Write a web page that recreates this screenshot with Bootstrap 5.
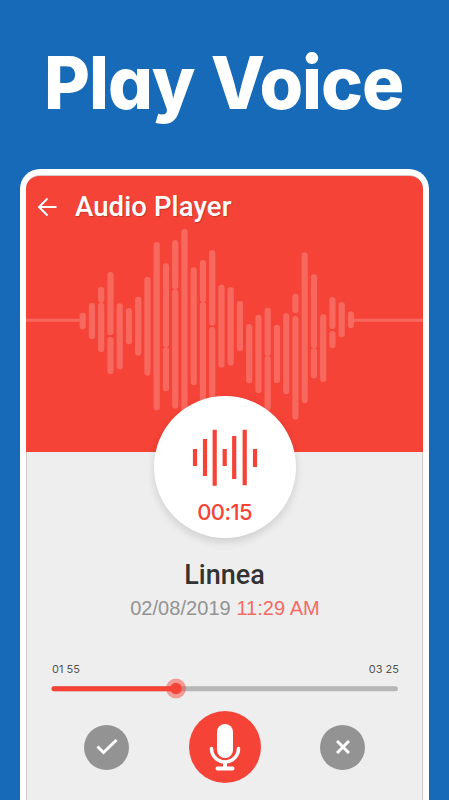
<!DOCTYPE html>
<html lang="en">
<head>
<meta charset="utf-8">
<meta name="viewport" content="width=device-width, initial-scale=1">
<title>Audio Player</title>
<link href="https://cdn.jsdelivr.net/npm/bootstrap@5.3.0/dist/css/bootstrap.min.css" rel="stylesheet">
<style>
body{background:#166ab7;height:800px;font-family:Roboto,"Liberation Sans",sans-serif}
.geo{font-family:Inter,"Open Sans",sans-serif;font-feature-settings:"cv11"}
.promo{height:169px;padding-top:37px}
.promo h1{font-size:73px;line-height:92px;font-weight:800;white-space:nowrap;width:max-content;margin-left:44px;letter-spacing:-1.100px;word-spacing:2px;transform:scaleX(.967);transform-origin:0 50%}
.phone{margin:0 20px;height:640px;border:6px solid #fff;border-bottom:0;border-radius:20px 20px 0 0;background:#eee;box-shadow:inset 0 0 0 1px #d5c9c9;flex:none}
.hero{height:276px;background:#f54337;border-radius:13px 13px 0 0;margin-top:1px}
.app-title{font-size:27.500px;font-weight:500;line-height:32px;letter-spacing:.1px;margin-left:17px;text-shadow:1px 1px 1px #0003}
.topbar{padding:15px 0 0 11px}
.dial{width:142px;height:142px;left:127.6px;top:220.3px;box-shadow:0 4px 8px #0002}
.dial svg{margin-top:33px;margin-left:1px}
.clock{font-size:22px;line-height:24px;font-weight:500;color:#f54337;margin-top:13px;letter-spacing:-.6px}
.meta{padding-top:107px}
.person{font-size:27px;line-height:32px;font-weight:500;color:#333}
.stamp{font-family:"Liberation Sans",sans-serif;font-size:20px;line-height:24px;color:#939393;margin-top:5px;letter-spacing:.05px;padding-left:1px}
.stamp span{color:#f46b66}
.timeline{margin:42px 25px 0 25px}
.times{font-size:11px;line-height:14px;color:#555;padding-left:1px;margin-right:-1px}
.player-track{display:block;margin-top:1px}
.controls{margin:12px 58px 0 58px}
.ctl{width:45px;height:45px;background:#939393}
.ctl-main{width:72px;height:72px;background:#f54337}
</style>
<script src="https://cdn.jsdelivr.net/npm/bootstrap@5.3.0/dist/js/bootstrap.bundle.min.js"></script>
</head>
<body class="m-0 overflow-hidden d-flex flex-column">
<header class="promo flex-shrink-0 text-white"><h1 class="geo mb-0">Play Voice</h1></header>
<main class="phone">
  <section class="hero position-relative">
    <svg class="position-absolute top-0 start-0" width="397" height="276" viewBox="26 176 397 276" fill="none" stroke="#fff" stroke-opacity=".2">
      <path stroke-width="3" d="M26 320.300H79.600M354 320.300H423"/>
      <path id="wave" stroke-width="6.200" stroke-linecap="round"/>
    </svg>
    <div class="topbar d-flex align-items-center position-relative text-white">
      <svg width="21" height="20" viewBox="0 0 21 20" fill="none" stroke="#fff" stroke-width="2"><path d="M19.500 10H2M10.500 1.500L2 10l8.500 8.500"/></svg>
      <div class="app-title">Audio Player</div>
    </div>
    <div class="dial position-absolute rounded-circle bg-white d-flex flex-column align-items-center">
      <svg width="66" height="58" viewBox="192 429 66 58" stroke="#f54337" stroke-width="4.200"><path d="M195 449v17M205 439v37M214.700 429.700v56M224.700 449v17M234.200 436v43M244.700 429.700v55.500M255 449v18"/></svg>
      <div class="clock geo">00:15</div>
    </div>
  </section>
  <section class="meta text-center">
    <div class="person">Linnea</div>
    <div class="stamp">02/08/2019 <span>11:29 AM</span></div>
  </section>
  <section class="timeline">
    <div class="times geo d-flex justify-content-between"><span>01 55</span><span>03 25</span></div>
    <svg class="player-track" width="347" height="22" viewBox="51 677 347 22" stroke-linecap="round" stroke-width="5"><path stroke="#b7b7b7" d="M54 688.700H395.500"/><path stroke="#f54337" d="M54 688.700H176"/><g stroke="none" fill="#f54337"><circle cx="176" cy="688.500" r="10" fill-opacity=".48"/><circle cx="176" cy="688.500" r="5.700"/></g></svg>
  </section>
  <section class="controls d-flex align-items-center justify-content-between">
    <div class="ctl rounded-circle d-flex align-items-center justify-content-center"><svg width="22" height="18" viewBox="0 0 22 18" fill="none" stroke="#fff" stroke-width="3"><path d="M1.500 8.500l6 6L20.500 2"/></svg></div>
    <div class="ctl-main rounded-circle d-flex align-items-center justify-content-center"><svg width="32" height="48" viewBox="0 0 32 48" fill="none" stroke="#fff" stroke-linecap="round"><rect x="8" y="1" width="16" height="34" rx="8" fill="#fff" stroke="none"/><path stroke-width="3.500" d="M2.500 25.500a13.500 13.500 0 0 0 27 0"/><path stroke-width="4" d="M16 39.500v5M8.500 45.500h15"/></svg></div>
    <div class="ctl rounded-circle d-flex align-items-center justify-content-center"><svg width="14" height="14" viewBox="0 0 14 14" stroke="#fff" stroke-width="3"><path d="M1 1l12 12M13 1L1 13"/></svg></div>
  </section>
</main>
<script>
// Each column holds one or two [top, bottom] spans, in thirds of a pixel.
const bars=[[278,328],[249,357],[200,248,248,396],[156,345,351,462],[250,448],[264,373],[230,407],[170,467],[66,571],[130,382,382,514],[60,208,208,566],[27,600],[142,495],[120,246,246,560],[91,317,321,560],[194,443],[201,437],[243,393],[312,490],[284,519],[263,408,408,572],[314,489],[280,522],[221,279,288,599],[97,549],[163,385,385,475],[283,486],[231,327,333,384],[246,352],[274,324]];
let d='';
bars.forEach((b,i)=>{for(let k=0;k<b.length;k+=2)d+=`M${82.7+i*9.25} ${223.1+b[k]/3}V${216.9+b[k+1]/3}`;});
document.getElementById('wave').setAttribute('d',d);
</script>
</body>
</html>
